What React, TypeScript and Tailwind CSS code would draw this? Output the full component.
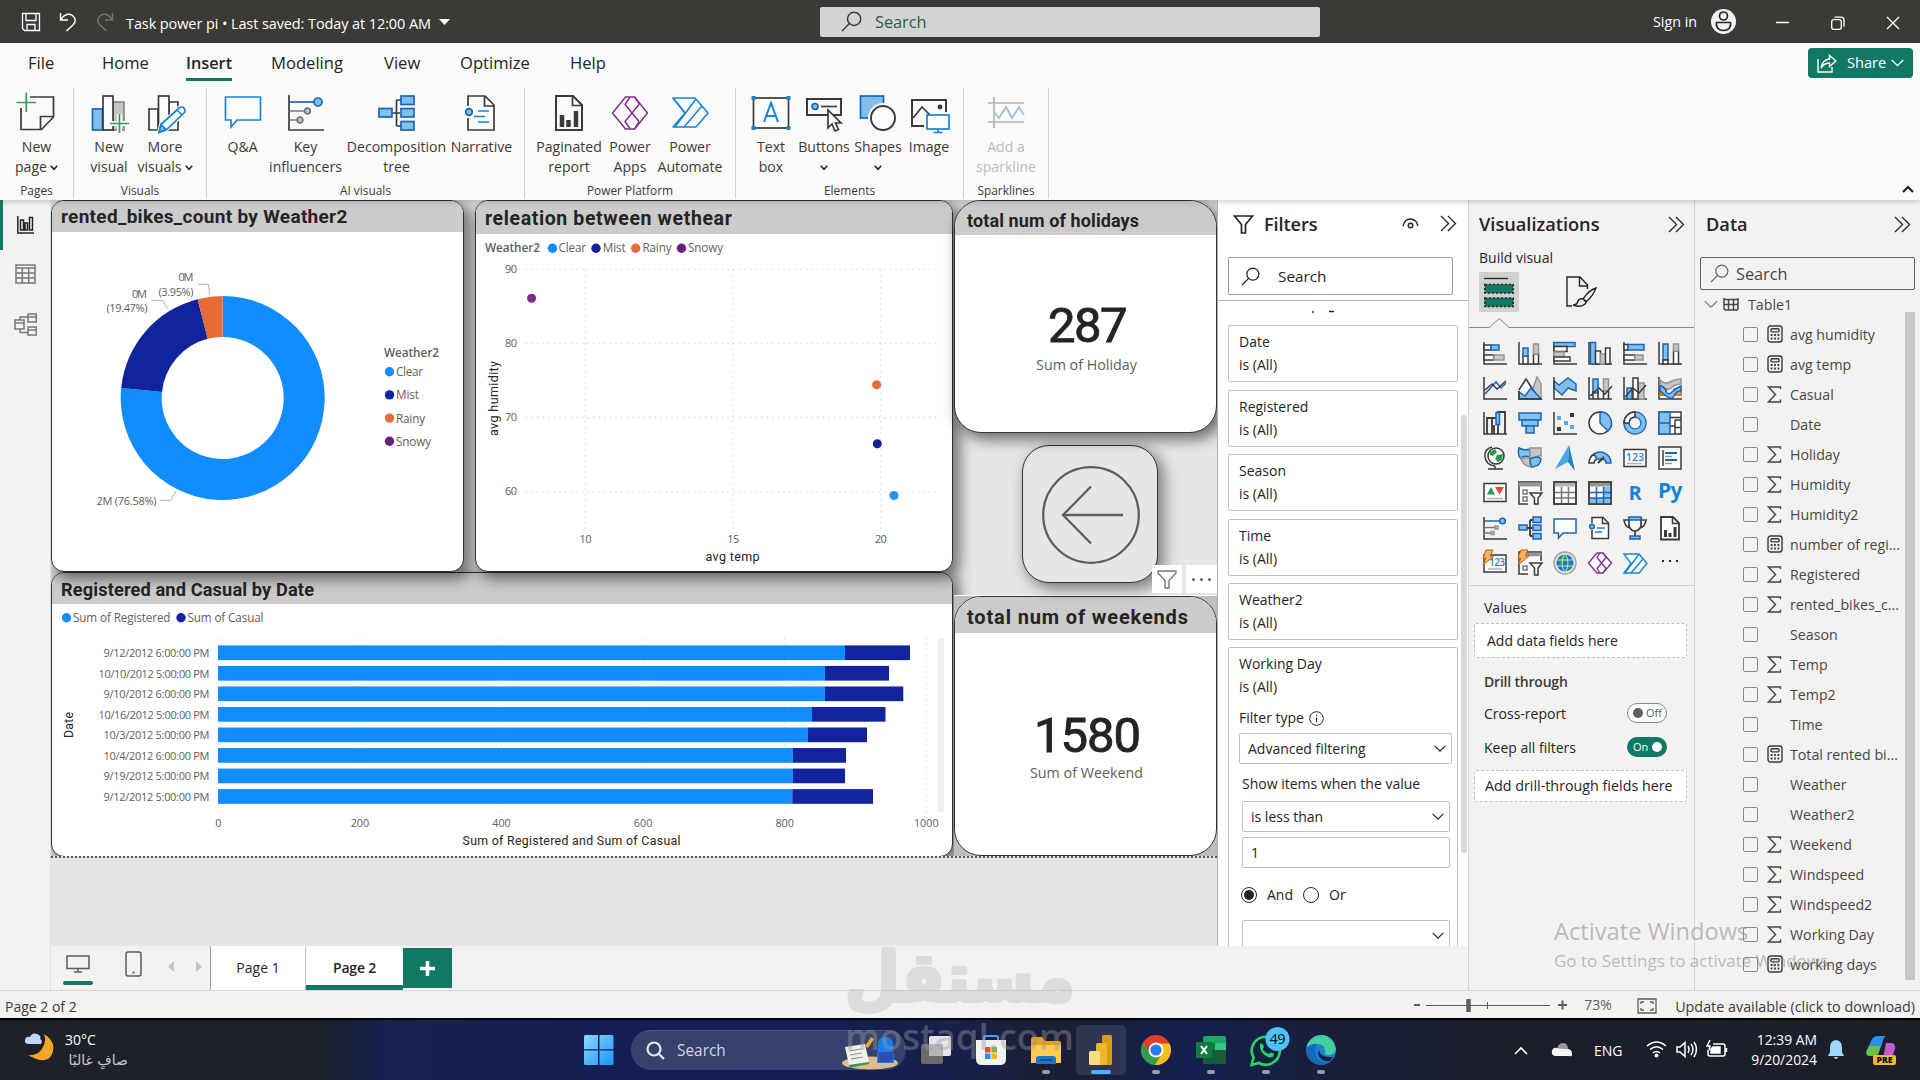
import React from "react";

const K = "#3b3a39";
const B = "#1a66b5";
const F = "#83beec";
const G = "#c8c6c4";
const A = "#1484d6";
const P = "#7f2a8c";
const W = "#fdfdfd";

type Kids = { children?: React.ReactNode };

/* ---------- generic glyphs ---------- */
const Big = ({ children }: Kids) => (
  <svg width="38" height="38" viewBox="0 0 38 38" fill="none" stroke={K} strokeWidth="1.7" className="block overflow-visible">
    {children}
  </svg>
);
const Sm = ({ children }: Kids) => (
  <svg width="24" height="24" viewBox="0 0 24 24" fill="none" stroke={K} strokeWidth="1.5" className="block overflow-visible">
    {children}
  </svg>
);
const Glass = ({ size, color, w = 1.4 }: { size: number; color: string; w?: number }) => (
  <svg width={size} height={size} viewBox="0 0 20 20" fill="none" stroke={color} strokeWidth={w} className="block shrink-0">
    <circle cx="12.5" cy="7.5" r="6.3" />
    <path d="M8 12L1 19" />
  </svg>
);
const Chev = ({ color = "#252423", size = 12, w = 1.2 }: { color?: string; size?: number; w?: number }) => (
  <svg width={size} height={size * 0.6} viewBox="0 0 12 7" fill="none" stroke={color} strokeWidth={w} className="block shrink-0">
    <path d="M.7.8L6 6l5.300-5.200" />
  </svg>
);
const TinyChev = () => (
  <svg width="8" height="6" viewBox="0 0 8 6" fill="none" stroke="#252423" strokeWidth="1.6" className="inline-block">
    <path d="M.8.8L4 4.400 7.200.8" />
  </svg>
);
const DoubleChev = () => (
  <svg width="17" height="17" viewBox="0 0 17 17" fill="none" stroke="#252423" strokeWidth="1.3" className="block">
    <path d="M1 1l7.500 7.500L1 16M8 1l7.500 7.500L8 16" />
  </svg>
);
const Sigma = () => (
  <svg width="15" height="17" viewBox="0 0 15 17" fill="none" stroke="#444" strokeWidth="1.4" className="block">
    <path d="M13.500 3V1H1.500l7 7.500L1.500 16h12v-2.500" />
  </svg>
);
const Calc = () => (
  <svg width="16" height="18" viewBox="0 0 16 18" fill="none" stroke="#3b3a39" strokeWidth="1.4" className="block">
    <rect x="1" y="1" width="14" height="16" rx="2.500" />
    <rect x="4" y="3.700" width="8" height="3.200" rx="1" />
    <path d="M3.700 10h1.800M7.100 10h1.800M10.500 10h1.800M3.700 13.500h1.800M7.100 13.500h1.800M10.500 13.500h1.800" strokeWidth="1.900" />
  </svg>
);

/* ---------- ribbon ---------- */
const RIcon: Record<string, React.ReactNode> = {
  newPage: (
    <Big>
      <path d="M12 3H35.500V23L23.500 35.500H3V14" />
      <path d="M22.500 35.500V22.500H35.500" />
      <path d="M-1.500 8.500H18M8.300-1.500V18" stroke="#2f9e5b" />
    </Big>
  ),
  newVisual: (
    <Big>
      <rect x="21" y="8" width="13" height="28" fill={G} stroke="#8a8886" />
      <rect x="2.500" y="15" width="10" height="21" fill={F} stroke={B} />
      <rect x="13" y="2" width="10" height="34" fill={W} />
      <path d="M20 29.500H39M29.500 20V39" stroke="#fafafa" strokeWidth="5" />
      <path d="M20 29.500H39M29.500 20V39" stroke="#2f9e5b" />
    </Big>
  ),
  moreVisuals: (
    <Big>
      <path d="M3 15h9v21H3zM23 8h9v28h-9z" />
      <rect x="12.500" y="2" width="10.500" height="34" fill={W} />
      <path d="M13 38.500l2-8L33 14q3-2 5 0 2 3 0 5L20 36z" fill="#fafafa" stroke="#fafafa" strokeWidth="4" />
      <path d="M13 38.500l2-8L33 14q3-2 5 0 2 3 0 5L20 36zM31 16l5 5" fill={W} stroke={A} />
      <path d="M13 38.500l2-8 5 5z" fill={F} stroke={A} />
    </Big>
  ),
  qa: (
    <Big>
      <path d="M1.500 3H36.500V26H13L7 33V26H1.500z" stroke={A} fill={W} />
    </Big>
  ),
  key: (
    <Big>
      <path d="M2 1V36H37" />
      <path d="M2 8H27" stroke={B} />
      <path d="M2 17H17M2 26H10" stroke="#777" />
      <circle cx="31" cy="8" r="4" fill={F} stroke={B} />
      <circle cx="20.500" cy="17" r="2.800" fill={G} stroke="#777" />
      <circle cx="13" cy="26" r="2.800" fill={G} stroke="#777" />
    </Big>
  ),
  decomp: (
    <Big>
      <path d="M14 19H22M18.500 6V32M18.500 6H23M18.500 32H23" />
      <g fill={F} stroke={B}>
        <rect x="1" y="14.500" width="13" height="8.500" />
        <rect x="23" y="2" width="13" height="8.500" />
        <rect x="23" y="14.500" width="13" height="8.500" />
        <rect x="23" y="27.500" width="13" height="8.500" />
      </g>
    </Big>
  ),
  narrative: (
    <Big>
      <path d="M5 12V2H22L31 11V36H5V24" />
      <path d="M21.500 2V12H31" />
      <path d="M15 17H26M11 22.500H22M15 28H26" stroke={A} />
      <circle cx="6" cy="18" r="3.300" fill={F} stroke={B} />
    </Big>
  ),
  paginated: (
    <Big>
      <path d="M6 2H23L32 11V36H6z" strokeWidth="2" />
      <path d="M22.500 2V11.500H32" />
      <path d="M12 33V21M18.500 33V26M26 33V17" strokeWidth="4.500" />
    </Big>
  ),
  apps: (
    <Big>
      <g stroke={P} strokeLinejoin="round" strokeWidth="1.400">
        <path d="M14.500 3h9L36.500 19 23.500 35h-9L1.500 19z" />
        <path d="M19 3.500L14 10.500 28 27.500M19 34.500L14 27.500 28.500 10M28.500 10L23.500 3M28 27.500L23.500 35" />
      </g>
    </Big>
  ),
  automate: (
    <Big>
      <g stroke={A} strokeLinejoin="round" strokeWidth="1.500">
        <path d="M2 4h22l13 15-12 14H2l12-14z" />
        <path d="M25 5L4 33M31 12L13 33M14 19l-12-15" />
      </g>
    </Big>
  ),
  textBox: (
    <Big>
      <rect x="1.500" y="4" width="35" height="30" fill={W} />
      <path d="M12 28l7-19 7 19M14.500 22h9" stroke={A} strokeWidth="2" />
      <g fill={A} stroke="none">
        <rect x="-.5" y="2" width="4" height="4" /><rect x="34.500" y="2" width="4" height="4" />
        <rect x="-.5" y="32" width="4" height="4" /><rect x="34.500" y="32" width="4" height="4" />
      </g>
    </Big>
  ),
  buttons: (
    <Big>
      <rect x="2" y="5" width="34" height="16" strokeWidth="2" />
      <circle cx="10" cy="12.500" r="3" fill={F} stroke={B} />
      <path d="M16 12.500H32" />
      <path d="M23 16V34l4-4 3 7 3.500-1.500L30.500 29H36z" fill={W} stroke={K} />
    </Big>
  ),
  shapes: (
    <Big>
      <rect x="1.500" y="2" width="23" height="22" fill={F} stroke={B} />
      <circle cx="24" cy="24" r="15" fill="#fafafa" stroke="none" />
      <circle cx="24" cy="24" r="12" fill={W} strokeWidth="1.900" />
    </Big>
  ),
  image: (
    <Big>
      <path d="M14 32H2V6H36V18" strokeWidth="2" />
      <path d="M3 24l9-11 9 9" />
      <circle cx="30" cy="13" r="1.600" fill={K} />
      <rect x="17" y="21" width="22" height="14" fill={W} stroke={A} />
      <path d="M28 35v3.500M23.500 38.500h9" stroke={A} />
    </Big>
  ),
  spark: (
    <Big>
      <path d="M1 9H37M1 28H37M7 3V34" stroke="#b5b3b1" />
      <path d="M7 18l5 6 7-11 6 11 7-11 5 8" stroke="#9dbdd0" />
    </Big>
  ),
};

const RItem = ({ icon, a, b, cls, chev, dim }: { icon: string; a: string; b?: string; cls: string; chev?: boolean; dim?: boolean }) => (
  <div className={"flex shrink-0 flex-col items-center " + cls}>
    {RIcon[icon]}
    <div className={"mt-[5px] text-center text-[14.100px] leading-5 whitespace-nowrap " + (dim ? "text-[#bebcba]" : "text-[#3b3a37]")}>
      {a}
      <br />
      {b}
      {chev && <span className={b ? "ml-[3px]" : ""}><TinyChev /></span>}
    </div>
  </div>
);
const RGroup = ({ label, cls, children }: Kids & { label: string; cls: string }) => (
  <div className={"flex h-[111px] shrink-0 flex-col border-r border-[#d2d0ce] " + cls}>
    <div className="flex h-[95px] justify-center pt-[6px]">{children}</div>
    <div className="text-center text-[11.900px] leading-[18px] text-[#3b3a39]">{label}</div>
  </div>
);

const TitleBar = () => (
  <div className="flex h-[43px] items-center bg-[#3b3a37] text-white">
    <svg width="20" height="20" viewBox="0 0 20 20" fill="none" stroke="#fff" strokeWidth="1.300" className="ml-[21px]">
      <path d="M1.500 1.500H18.500V18.500H3.500L1.500 16.500zM5 1.500V8.500H15V1.500M6 18.500V12.500H14V18.500" />
    </svg>
    <svg width="18" height="20" viewBox="0 0 18 20" fill="none" stroke="#fff" strokeWidth="1.400" className="ml-[18px]">
      <path d="M1.500 1V8H9M1.800 7.500C5 2 10 1 13.500 3.500 17 6.500 17 10 14 13L7.500 19" />
    </svg>
    <svg width="18" height="20" viewBox="0 0 18 20" fill="none" stroke="#777572" strokeWidth="1.400" className="ml-[19px]">
      <path d="M16.500 1V8H9M16.200 7.500C13 2 8 1 4.500 3.500 1 6.500 1 10 4 13L10.500 19" />
    </svg>
    <div className="ml-[12px] w-[305px] pt-[5px] text-[14.500px] tracking-[-0.1px] whitespace-nowrap">Task power pi • Last saved: Today at 12:00 AM</div>
    <svg width="12" height="8" viewBox="0 0 12 8" className="mt-[3px] ml-[8px] shrink-0"><path d="M0 0h11L5.500 6z" fill="#fff" /></svg>
    <div className="ml-[369px] flex h-[30px] w-[500px] items-center rounded-[2px] bg-[#d4d3d1] pl-[21px]">
      <Glass size={21} color="#3b3a39" />
      <span className="ml-[13px] pt-[2px] text-[16.300px] text-[#245c4d]">Search</span>
    </div>
    <span className="ml-[333px] w-[46px] text-[14.300px] whitespace-nowrap">Sign in</span>
    <svg width="25" height="25" viewBox="0 0 25 25" className="ml-[12px]">
      <circle cx="12.500" cy="12.500" r="12.500" fill="#f3f2f1" />
      <g fill="none" stroke="#252423" strokeWidth="1.700">
        <circle cx="12.500" cy="7" r="4" />
        <path d="M5.500 13.500H19.500C20.500 18 17.500 21.500 12.500 21.500S4.500 18 5.500 13.500z" />
      </g>
    </svg>
    <svg width="124" height="14" viewBox="0 0 124 14" fill="none" stroke="#fff" strokeWidth="1.300" className="mt-[3px] ml-[40px]">
      <path d="M0 6.500H13M111 1l12 12M123 1l-12 12" />
      <rect x="55.700" y="3.700" width="9.600" height="9.600" rx="2" />
      <path d="M58.500 1.200H65q3 0 3 3v6.500" />
    </svg>
  </div>
);

const Ribbon = () => (
  <div className="relative z-20 h-[157px] bg-[#fafafa] shadow-[0_2px_6px_rgba(0,0,0,0.18)]">
    <div className="flex h-[45px] justify-between pt-[8px] text-[16.600px] text-[#252423]">
      <div className="flex">
        <span className="w-[74px] pl-[28px]">File</span>
        <span className="w-[84px] pl-[28px]">Home</span>
        <span className="w-[85px] pl-[28px]">
          <span className="inline-block h-[30px] border-b-[3px] border-[#117865] text-[16.300px] font-semibold">Insert</span>
        </span>
        <span className="w-[113px] pl-[28px]">Modeling</span>
        <span className="w-[76px] pl-[28px]">View</span>
        <span className="w-[109px] pl-[28px]">Optimize</span>
        <span className="pl-[29px]">Help</span>
      </div>
      <div className="mt-[-3px] mr-[7px] flex h-[30px] w-[105px] items-center rounded-[4px] bg-[#117865] pl-[9px] text-white">
        <svg width="20" height="19" viewBox="0 0 20 19" fill="none" stroke="#fff" strokeWidth="1.400">
          <path d="M1 5V18H15V13" />
          <path d="M12.500 1.500L19 7l-6.500 5.500V9C8.500 9 6 11 4 14 4.500 9 8 5.200 12.500 5z" />
        </svg>
        <span className="mr-[5px] ml-[10px] text-[14.600px]">Share</span>
        <Chev color="#fff" size={13} />
      </div>
    </div>
    <div className="flex">
      <RGroup label="Pages" cls="w-[74px]">
        <RItem icon="newPage" a="New" b="page" chev cls="w-[72px]" />
      </RGroup>
      <RGroup label="Visuals" cls="w-[133px]">
        <RItem icon="newVisual" a="New" b="visual" cls="w-[54px]" />
        <RItem icon="moreVisuals" a="More" b="visuals" chev cls="mr-[4px] w-[58px]" />
      </RGroup>
      <RGroup label="AI visuals" cls="w-[318px]">
        <RItem icon="qa" a="Q&A" cls="ml-[2px] w-[48px]" />
        <RItem icon="key" a="Key" b="influencers" cls="w-[78px]" />
        <RItem icon="decomp" a="Decomposition" b="tree" cls="w-[104px]" />
        <RItem icon="narrative" a="Narrative" cls="w-[66px]" />
      </RGroup>
      <RGroup label="Power Platform" cls="w-[211px]">
        <RItem icon="paginated" a="Paginated" b="report" cls="w-[72px]" />
        <RItem icon="apps" a="Power" b="Apps" cls="w-[50px]" />
        <RItem icon="automate" a="Power" b="Automate" cls="mr-[2px] w-[70px]" />
      </RGroup>
      <RGroup label="Elements" cls="w-[228px]">
        <RItem icon="textBox" a="Text" b="box" cls="ml-[4px] w-[44px]" />
        <RItem icon="buttons" a="Buttons" chev cls="ml-[3px] w-[56px]" />
        <RItem icon="shapes" a="Shapes" chev cls="w-[52px]" />
        <RItem icon="image" a="Image" cls="w-[50px]" />
      </RGroup>
      <RGroup label="Sparklines" cls="w-[85px]">
        <RItem icon="spark" a="Add a" b="sparkline" dim cls="w-[84px]" />
      </RGroup>
      <div className="flex flex-1 items-end justify-end pr-[6px] pb-[6px]">
        <svg width="12" height="8" viewBox="0 0 12 8" fill="none" stroke="#252423" strokeWidth="2.200"><path d="M1 7l5-5 5 5" /></svg>
      </div>
    </div>
  </div>
);

/* ---------- report canvas ---------- */
const Card = ({ cls, head, title, titleCls, children }: Kids & { cls: string; head: string; title: string; titleCls: string }) => (
  <div className={"flex shrink-0 flex-col overflow-hidden border border-[#333] bg-white " + cls}>
    <div className={"flex shrink-0 items-center font-['Roboto'] font-bold whitespace-nowrap text-[#252423] " + head}>
      <span className={titleCls}>{title}</span>
    </div>
    {children}
  </div>
);

const CX = 222.700, CY = 398, RO = 102, RI = 61;
const pt = (r: number, f: number) => {
  const t = f * Math.PI * 2;
  return `${CX + r * Math.sin(t)} ${CY - r * Math.cos(t)}`;
};
const arc = (a: number, b: number) => {
  const l = b - a > 0.5 ? 1 : 0;
  return `M${pt(RO, a)}A${RO} ${RO} 0 ${l} 1 ${pt(RO, b)}L${pt(RI, b)}A${RI} ${RI} 0 ${l} 0 ${pt(RI, a)}Z`;
};
const series = [
  { n: "Clear", c: "#118dff" },
  { n: "Mist", c: "#12239e" },
  { n: "Rainy", c: "#e66c37" },
  { n: "Snowy", c: "#6b1f7c" },
];

const Donut = () => (
  <svg width="410" height="337" viewBox="52 232 410 337" className="block shrink-0" fontFamily="Open Sans" fontSize="11" fill="#605e5c">
    <path d={arc(0, 0.7658)} fill="#118dff" />
    <path d={arc(0.7658, 0.9605)} fill="#12239e" />
    <path d={arc(0.9605, 1)} fill="#e66c37" />
    <g fill="none" stroke="#b3b0ad">
      <path d="M197.500 284.300H208.500L209.700 295M151.500 300.300H162.500L168 309M160 500.300H171L176 491" />
    </g>
    <text x="178.500" y="281" textLength="15">0M</text>
    <text x="158.500" y="296" textLength="35">(3.95%)</text>
    <text x="132" y="298" textLength="15">0M</text>
    <text x="106.500" y="312.300" textLength="41">(19.47%)</text>
    <text x="96.500" y="505" textLength="60">2M (76.58%)</text>
    <text x="384" y="357" fontSize="11.800" fontWeight="600" textLength="55">Weather2</text>
    {series.map((s, i) => (
      <g key={s.n}>
        <circle cx="389.500" cy={371.700 + i * 23.200} r="4.700" fill={s.c} />
        <text x="396" y={375.900 + i * 23.300} fontSize="11.700" textLength={[27, 23, 29, 35][i]}>{s.n}</text>
      </g>
    ))}
  </svg>
);

const Scatter = () => (
  <svg width="476" height="335" viewBox="476 234 476 335" className="block shrink-0" fontFamily="Open Sans" fontSize="11" fill="#605e5c">
    <text x="485" y="252" fontSize="11.800" fontWeight="600" textLength="55">Weather2</text>
    {series.map((s, i) => (
      <g key={s.n}>
        <circle cx={[552.500, 596, 635.700, 681.500][i]} cy="248.300" r="4.700" fill={s.c} />
        <text x={[558.500, 602.700, 642.500, 688][i]} y="252.200" fontSize="11.700" textLength={[27.500, 23, 29, 35][i]}>{s.n}</text>
      </g>
    ))}
    <g stroke="#d0cecc" strokeDasharray="1 4.600" strokeWidth="1.300">
      {[269.300, 343.400, 417.500, 491.600].map((y) => <path key={y} d={`M526 ${y}H938`} />)}
      {[585.300, 733, 880.600].map((x) => <path key={x} d={`M${x} 270V531`} />)}
    </g>
    {["90", "80", "70", "60"].map((t, i) => <text key={t} x="505" y={273 + i * 74.100} textLength="12">{t}</text>)}
    {["10", "15", "20"].map((t, i) => <text key={t} x={579.500 + i * 147.700} y="543" textLength="12">{t}</text>)}
    <circle cx="531.600" cy="298.300" r="4.500" fill="#7f2a8c" />
    <circle cx="876.600" cy="384.700" r="4.500" fill="#e66c37" />
    <circle cx="877.300" cy="443.800" r="4.500" fill="#12239e" />
    <circle cx="894" cy="495.500" r="4.500" fill="#2196ff" />
    <g fill="#252423" fontFamily="Roboto" fontSize="12.500">
      <text x="705.500" y="561" textLength="54">avg temp</text>
      <text transform="translate(498 436)rotate(-90)" textLength="75">avg humidity</text>
    </g>
  </svg>
);

const bars: [string, number, number][] = [
  ["9/12/2012 6:00:00 PM", 845, 910],
  ["10/10/2012 5:00:00 PM", 825, 889],
  ["9/10/2012 6:00:00 PM", 825, 903.300],
  ["10/16/2012 5:00:00 PM", 812, 885.500],
  ["10/3/2012 5:00:00 PM", 808, 867],
  ["10/4/2012 6:00:00 PM", 793, 846],
  ["9/19/2012 5:00:00 PM", 793, 845],
  ["9/12/2012 5:00:00 PM", 792.300, 873],
];
const Bars = () => (
  <svg width="899" height="250" viewBox="52 604 899 250" className="block shrink-0" fontFamily="Open Sans" fontSize="11" fill="#605e5c">
    <circle cx="66.500" cy="617.700" r="4.700" fill="#118dff" />
    <text x="73" y="621.500" fontSize="11.700" textLength="97.500">Sum of Registered</text>
    <circle cx="181" cy="617.700" r="4.700" fill="#12239e" />
    <text x="187.500" y="621.500" fontSize="11.700" textLength="76">Sum of Casual</text>
    <rect x="938" y="638" width="6" height="175" rx="3" fill="#efefef" />
    {[0, 1, 2, 3, 4, 5].map((i) => (
      <g key={i}>
        <path d={`M${218.300 + i * 141.600} 638V813`} stroke="#d0cecc" strokeDasharray="1 4.600" />
        <text x={218.300 + i * 141.600} y="827" textAnchor="middle" fontSize="10.800">{i * 200}</text>
      </g>
    ))}
    {bars.map(([d, a, b], i) => (
      <g key={i}>
        <text x="209.500" y={657 + i * 20.530} textAnchor="end" textLength={d.length > 20 ? 111 : 106}>{d}</text>
        <rect x="218" y={645.400 + i * 20.530} width={a - 218} height="14.700" fill="#118dff" />
        <rect x={a} y={645.400 + i * 20.530} width={b - a} height="14.700" fill="#12239e" />
      </g>
    ))}
    <g fill="#252423" fontFamily="Roboto" fontSize="12.300">
      <text x="462.500" y="844.500" textLength="218">Sum of Registered and Sum of Casual</text>
      <text transform="translate(73 738)rotate(-90)" textLength="26">Date</text>
    </g>
  </svg>
);

const Kpi = ({ v, label, cls, gap }: { v: string; label: string; cls: string; gap: string }) => (
  <div className={"text-center " + cls}>
    <div className={"pl-[3px] font-['Roboto'] text-[49px] leading-[56px] text-[#252423] [-webkit-text-stroke:0.9px_#252423] " + gap}>{v}</div>
    <div className="pl-[2px] text-[14.300px] leading-5 text-[#605e5c]">{label}</div>
  </div>
);

const Canvas = () => (
  <div className="flex h-[746px] w-[1166px] shrink-0 flex-col overflow-hidden bg-[#e6e6e6]">
    <div className="flex h-[658px] overflow-hidden border-b-2 border-dotted border-[#555]">
      <div className="flex w-[902px] shrink-0 flex-col">
        <div className="z-10 flex gap-[11px]">
          <Card cls="h-[371.500px] w-[413px] rounded-[13px] shadow-[5px_5px_14px_2px_rgba(0,0,0,0.5)]" head="h-[31px] bg-[#cbcbcb] pt-[2px] pl-[9px]" title="rented_bikes_count by Weather2" titleCls="text-[19px] tracking-[0.3px]">
            <Donut />
          </Card>
          <Card cls="h-[371.500px] w-[478px] rounded-[13px] shadow-[5px_5px_14px_2px_rgba(0,0,0,0.5)]" head="h-[33px] bg-[#cbcbcb] pl-[9px] pt-[3px]" title="releation between wethear" titleCls="text-[19.500px] tracking-[0.620px]">
            <Scatter />
          </Card>
        </div>
        <Card cls="mt-[0.500px] h-[285px] w-[902px] rounded-[13px] shadow-[5px_5px_14px_2px_rgba(0,0,0,0.5)]" head="h-[31px] bg-[#cbcbcb] pl-[9px] pt-[2px]" title="Registered and Casual by Date" titleCls="text-[18.200px] tracking-[0.130px]">
          <Bars />
        </Card>
      </div>
      <div className="ml-px flex w-[263px] shrink-0 flex-col items-center">
        <Card cls="z-10 h-[233px] w-[263px] rounded-[27px] shadow-[5px_5px_14px_2px_rgba(0,0,0,0.5)]" head="h-[34px] bg-[#cbcbcb] pl-[12px] pt-[4px]" title="total num of holidays" titleCls="text-[18px] tracking-[0.1px]">
          <Kpi v="287" label="Sum of Holiday" cls="pt-[63px]" gap="mb-px tracking-[-1.500px]" />
        </Card>
        <div className="relative mt-[12px] ml-[9px] flex h-[138px] w-[136px] shrink-0 items-center justify-center rounded-[27px] border border-[#333] bg-[#e6e6e6] pl-px pt-px shadow-[5px_5px_14px_2px_rgba(0,0,0,0.42)]">
          <svg width="100" height="100" viewBox="0 0 100 100" fill="none" stroke="#605e5c" strokeWidth="2.300">
            <circle cx="50" cy="50" r="47.800" />
            <path d="M82 50H22M50 21.500L22 50l28 28.500" />
          </svg>
          <div className="absolute top-[119px] left-[129px] z-20 flex gap-[4px]">
            <div className="flex h-[28px] w-[30px] items-center justify-center bg-white">
              <svg width="20" height="19" viewBox="0 0 20 19" fill="none" stroke="#777" strokeWidth="1.400"><path d="M1 1H19V3L12 10.500V18H8V10.500L1 3z" /></svg>
            </div>
            <div className="flex h-[28px] w-[31px] items-center justify-center gap-[5px] bg-white">
              <i className="size-[3px] rounded-full bg-[#666]" /><i className="size-[3px] rounded-full bg-[#666]" /><i className="size-[3px] rounded-full bg-[#666]" />
            </div>
          </div>
        </div>
        <div className="mt-[12px] h-[261px] w-[263px] border-t border-[#f8f8f8] bg-[#bdbdbd]">
          <Card cls="h-[260px] w-[263px] rounded-[27px]" head="h-[36px] bg-[#cbcbcb] pl-[12px] pt-[3px]" title="total num of weekends" titleCls="text-[20px] tracking-[0.850px]">
            <Kpi v="1580" label="Sum of Weekend" cls="pt-[75px]" gap="mb-[-1px] tracking-[-1px]" />
          </Card>
        </div>
      </div>
    </div>
  </div>
);

/* ---------- filters ---------- */
const Select = ({ t, cls }: { t: string; cls: string }) => (
  <div className={"flex shrink-0 items-center justify-between rounded-[2px] border border-[#c2c0be] pr-[5px] pl-[8px] " + cls}>
    <span>{t}</span>
    <Chev />
  </div>
);
const Filters = () => (
  <div className="flex h-[746px] w-[251px] shrink-0 flex-col overflow-hidden border-l border-[#b3b0ad] bg-white text-[#252423]">
    <div className="flex h-[57px] shrink-0 items-center pb-[8px] pl-[15px]">
      <svg width="21" height="19" viewBox="0 0 21 19" fill="none" stroke="#252423" strokeWidth="1.700"><path d="M1.500 1H19.500L12.500 9.500V18H8.500V9.500z" /></svg>
      <span className="ml-[10px] w-[138px] pt-px text-[18.200px] font-semibold tracking-[-0.1px]">Filters</span>
      <svg width="17" height="12" viewBox="0 0 17 12" fill="none" stroke="#252423" strokeWidth="1.400" className="mb-[2px]"><path d="M1 8C2 3.500 5 1 8.500 1S15 3.500 16 8" /><circle cx="8.500" cy="7.500" r="2.300" /></svg>
      <span className="mb-[2px] ml-[21px]"><DoubleChev /></span>
    </div>
    <div className="flex h-[44px] shrink-0 border-b border-[#b3b0ad] pl-[10px]">
      <div className="flex h-[38px] w-[225px] items-center rounded-[2px] border border-[#a19f9d] pl-[12px]">
        <Glass size={19} color="#252423" w={1.300} />
        <span className="ml-[18px] text-[15.300px]">Search</span>
      </div>
    </div>
    <div className="flex min-h-0 flex-1 pl-[10px] text-[14px] leading-5">
      <div className="flex w-[230px] shrink-0 flex-col gap-[7.400px] overflow-hidden">
        <div className="h-[17px] shrink-0 pt-[9px] pl-[84px]">
          <svg width="24" height="4" viewBox="0 0 24 4"><path d="M0 2h2M17 1.500h5" stroke="#252423" strokeWidth="1.500" /></svg>
        </div>
        {["Date", "Registered", "Season", "Time", "Weather2"].map((n) => (
          <div key={n} className="flex h-[57px] shrink-0 flex-col gap-[3px] rounded-[2px] border border-[#c2c0be] pt-[6px] pl-[10px]">
            <span>{n}</span>
            <span>is (All)</span>
          </div>
        ))}
        <div className="flex h-[400px] shrink-0 flex-col rounded-[2px] border border-[#c2c0be] pt-[6px] pl-[10px]">
          <span>Working Day</span>
          <span className="mt-[3px]">is (All)</span>
          <span className="mt-[11px] flex items-center gap-[5px]">
            Filter type
            <svg width="15" height="15" viewBox="0 0 15 15" fill="none" stroke="#252423"><circle cx="7.500" cy="7.500" r="6.800" /><path d="M7.500 6.500V11M7.500 3.800V5.200" /></svg>
          </span>
          <Select t="Advanced filtering" cls="mt-[5px] h-[31px] w-[213px]" />
          <span className="mt-[10px] ml-[3px]">Show items when the value</span>
          <Select t="is less than" cls="mt-[7px] ml-[3px] h-[31px] w-[208px]" />
          <div className="mt-[5px] ml-[3px] h-[31px] w-[208px] shrink-0 rounded-[2px] border border-[#c2c0be] pt-[5px] pl-[8px]">1</div>
          <div className="mt-[17px] ml-[2px] flex h-5 shrink-0 items-center">
            <i className="flex size-[16px] items-center justify-center rounded-full border border-[#252423]"><i className="size-[10px] rounded-full bg-[#252423]" /></i>
            <span className="ml-[10px]">And</span>
            <i className="ml-[10px] size-[16px] rounded-full border border-[#252423]" />
            <span className="ml-[10px]">Or</span>
          </div>
          <Select t="" cls="mt-[15px] ml-[3px] h-[31px] w-[208px]" />
        </div>
      </div>
      <div className="mt-[114px] ml-[3px] h-[438px] w-[6px] rounded-full bg-[#dad8d6]" />
    </div>
  </div>
);

/* ---------- visualization gallery ---------- */
const ax = <path d="M1 1V23H24" />;
const blue = { fill: F, stroke: B };
const grey = { fill: G, stroke: "#979593" };
const bolt = <path d="M3-1h7L7 5h4L0 14 3 7H0z" fill="#f7b267" stroke="#c4600b" strokeWidth="1" />;
const gallery: React.ReactNode[] = [
  <Sm>{ax}<rect x="1" y="4" width="7" height="5" fill={W} /><rect x="8" y="4" width="8" height="5" {...blue} /><rect x="1" y="14" width="10" height="5" fill={W} /><rect x="11" y="14" width="10" height="5" {...grey} /></Sm>,
  <Sm>{ax}<rect x="5" y="15" width="5" height="8" fill={W} /><rect x="5" y="7" width="5" height="8" {...blue} /><rect x="15.500" y="13" width="5" height="10" fill={W} /><rect x="15.500" y="3" width="5" height="10" {...grey} /></Sm>,
  <Sm>{ax}<rect x="1" y="1.500" width="21" height="4" {...blue} /><rect x="1" y="5.500" width="13" height="5" fill={W} /><rect x="1" y="11" width="10" height="5" {...grey} /><rect x="1" y="16" width="16" height="4" fill={W} /></Sm>,
  <Sm>{ax}<rect x="2.500" y="1.500" width="5" height="21.500" {...blue} /><rect x="7.500" y="10" width="5" height="13" fill={W} /><rect x="12.500" y="13" width="5" height="10" {...grey} /><rect x="17.500" y="7" width="4.500" height="16" fill={W} /></Sm>,
  <Sm>{ax}<rect x="1" y="3.500" width="4" height="5.500" fill={W} /><rect x="5" y="3.500" width="16" height="5.500" {...blue} /><rect x="1" y="14" width="11" height="5" fill={W} /><rect x="12" y="14" width="8" height="5" {...grey} /></Sm>,
  <Sm>{ax}<rect x="5" y="3" width="5" height="16" {...blue} /><rect x="5" y="19" width="5" height="4" fill={W} /><rect x="15.500" y="10" width="5" height="13" fill={W} /><rect x="15.500" y="3" width="5" height="7" {...grey} /></Sm>,
  <Sm>{ax}<path d="M2 18L13 6l5 6 5-5" stroke={B} /><path d="M2 14l7-6 5 5 9-8" /></Sm>,
  <Sm><path d="M11 23L19 1l4 7v15z" {...grey} /><path d="M1 14L8 3l9 14" fill={W} /><path d="M1 23V16l6 4 6-8 10 11z" {...blue} /><path d="M1 15V23H24" /></Sm>,
  <Sm><path d="M1 5l5 4 9-7 8 6v7l-8-3-6 7-8-7z" {...blue} />{ax}</Sm>,
  <Sm>{ax}<rect x="5" y="3" width="5" height="14" {...blue} /><rect x="15.500" y="3" width="5" height="12" {...grey} /><path d="M5 23V15M10 23V15M15.500 23V15M20.500 23V15M2 20l9-8 6 6 7-8" /></Sm>,
  <Sm>{ax}<rect x="4" y="12" width="5" height="11" {...blue} /><rect x="15" y="7" width="6" height="16" {...grey} /><rect x="10" y="2" width="5" height="21" fill={W} /><path d="M2 21l8-9 6 5 7-8" /></Sm>,
  <Sm>{ax}<path d="M2 4q5 5 10 2t11-3v5q-6 0-10 4T2 9z" {...grey} /><path d="M2 13h6v6H2zM16 13h7v6h-7z" fill="#f4a23c" stroke="#c4600b" /><path d="M2 10q4 0 6 5t6 1 9-6v5q-5 0-7 5t-9-1-5-4z" {...blue} /></Sm>,
  <Sm>{ax}<path d="M4 23V7h5v16M15 23V1h7v22M9 7h6M11 23V14" strokeWidth="1.800" /><rect x="13" y="1.500" width="3.500" height="12" {...blue} /></Sm>,
  <Sm><g {...blue}><rect x="1" y="2" width="22" height="7" /><rect x="4" y="9" width="16" height="6" /><rect x="8" y="15" width="8" height="7" /></g></Sm>,
  <Sm>{ax}<g stroke="none"><path d="M17 2h4v4h-4zM4 16h4v4H4z" fill={K} /><path d="M4 5h4v4H4zM11 10h4v4h-4zM17 14h4v4h-4z" fill="#5aa9e6" /></g></Sm>,
  <Sm><circle cx="12" cy="12" r="11" fill={W} /><path d="M12 1v11l8 8A11 11 0 0 0 12 1z" {...blue} /></Sm>,
  <Sm><circle cx="12" cy="12" r="8.500" stroke={B} strokeWidth="6.500" /><circle cx="12" cy="12" r="8.500" stroke={F} strokeWidth="4" /><path d="M3.500 12A8.500 8.500 0 0 1 12 3.500" stroke={W} strokeWidth="5" /><path d="M1 12A11 11 0 0 1 12 1V6A6 6 0 0 0 6 12z" /></Sm>,
  <Sm><rect x="1" y="1" width="22" height="22" fill={W} /><path d="M1 1H12V23H1z" {...blue} /><path d="M1 12H12" stroke={B} /><path d="M12 6.500H23M12 15H17V23M17 9V15M17 9H23M17 16.500h6" /></Sm>,
  <Sm><circle cx="13" cy="10" r="8" fill={W} /><path d="M7 6l5-3 2 3-4 4-3-1zM14 9l6-1-1 6-4 2-3-3z" fill="#2b9a50" stroke="none" /><path d="M9 1Q1 3 2 11t10 9M12 20v3M5 23H20" /></Sm>,
  <Sm><path d="M1 2q5 3 11 1v8q-7-2-9 2-4-4-2-11z" {...blue} /><path d="M12 2h11v8q-4-1-5 3h-6zM3 12h10v9Q5 20 3 12z" {...grey} /><path d="M12 13q8-4 11 0-1 7-6 7-5 4-5-7z" {...blue} /></Sm>,
  <Sm><path d="M16-1L2 23l13-7z" fill="#4aa8e8" stroke="none" /><path d="M16-1l6 26-7-9z" fill="#1f7fc9" stroke="none" /></Sm>,
  <Sm><path d="M1 17A11 11 0 0 1 6 8l3 5Q6 14 6 17z" fill={W} /><path d="M6 8a11 11 0 0 1 17 9H18q0-3-3-4l-6 0z" {...blue} /><path d="M10 17l6-6" strokeWidth="2" /></Sm>,
  <Sm><rect x="1" y="3.500" width="22" height="17" fill={W} /><text x="3" y="14.500" fill={A} stroke="none" fontFamily="Open Sans" fontSize="10" fontWeight="600" textLength="18">123</text><path d="M4 17.500H19" stroke="#b5b3b1" /></Sm>,
  <Sm><rect x="1" y="1" width="22" height="22" fill={W} /><path d="M5 4V20" /><path d="M7 7H19M7 14H19" stroke={B} strokeWidth="2" /><path d="M7 10.500h7M7 17.500h7" stroke="#979593" /></Sm>,
  <Sm><rect x="1" y="2.500" width="22" height="18" fill={W} /><path d="M4 13.500L8 6l4 7.500z" fill="#2b9a50" stroke="none" /><path d="M12 6h9l-4.500 7.500z" fill="#e04a2f" stroke="none" /><path d="M4 17.500H20" stroke="#b5b3b1" /></Sm>,
  <Sm><path d="M10 23H1V1H23V10" fill={W} /><path d="M1 3.500H23" strokeWidth="4" stroke="#979593" /><path d="M5 9h4v4H5zM5 16h4v4H5z" stroke="#777" /><path d="M12 12H24L20 17V23H16.500V17z" fill={W} /></Sm>,
  <Sm><rect x="1" y="1" width="22" height="22" fill={W} /><path d="M1 3.500H23" strokeWidth="4" stroke="#b5b3b1" /><path d="M1 11.500H23M1 17H23M8.500 6V23M15.500 6V23" stroke="#777" /><rect x="1" y="1" width="22" height="22" /></Sm>,
  <Sm><rect x="1" y="1" width="22" height="22" fill={W} /><path d="M15.500 6H23V23H1V17H15.500z" fill={F} stroke="none" /><path d="M1 3.500H23" strokeWidth="4" stroke="#979593" /><path d="M1 11.500H23M1 17H23M8.500 6V23M15.500 6V23" stroke={B} /><rect x="1" y="1" width="22" height="22" /></Sm>,
  <div className="flex size-6 items-center justify-center font-['Open_Sans'] text-[20px] font-bold text-[#1484d6]">R</div>,
  <div className="flex size-6 items-center justify-center pb-1 font-['Open_Sans'] text-[21px] font-bold tracking-[-0.5px] text-[#1484d6]">Py</div>,
  <Sm>{ax}<path d="M1 5H17" stroke={B} /><path d="M1 11.500H12M1 17H8" stroke="#777" /><circle cx="19.500" cy="5" r="2.800" {...blue} /><rect x="12" y="10" width="3" height="3" {...grey} /><rect x="8" y="15.500" width="3" height="3" {...grey} /></Sm>,
  <Sm><path d="M8 12H15M12 4V20M12 4h3M12 20h3" strokeWidth="1.800" /><g {...blue}><rect x="1" y="9" width="8" height="5" /><rect x="15" y="1" width="8" height="5.500" /><rect x="15" y="9" width="8" height="5.500" /><rect x="15" y="17.500" width="8" height="5.500" /></g></Sm>,
  <Sm><path d="M1 3H23V17H10L5.500 22V17H1z" stroke={B} fill={W} /></Sm>,
  <Sm><path d="M4 7V1.500H15L20.500 7V22.500H4V14" fill={W} /><path d="M14.500 1.500V7.500H20" /><path d="M9 12H17M7 16H14" stroke={A} /><circle cx="4" cy="10.500" r="2.300" {...blue} /></Sm>,
  <Sm><path d="M6 2H18V10Q16 15 12 15T6 10zM6 4H1Q2 11 7 12M18 4h5Q22 11 17 12M12 15v5" fill={W} strokeWidth="1.700" /><rect x="6" y="1" width="12" height="3" {...blue} /><rect x="7" y="20" width="10" height="3" {...blue} /></Sm>,
  <Sm><path d="M3 1H15L21 7V23.500H3z" fill={W} strokeWidth="1.800" /><path d="M14.500 1V7.500H21" /><path d="M7.500 21V14M12 21V17M17 21V11" strokeWidth="3" /></Sm>,
  <Sm><rect x="1" y="4" width="22" height="17" fill={W} /><text x="6" y="15" fill={A} stroke="none" fontFamily="Open Sans" fontSize="10" fontWeight="600" textLength="16">123</text><path d="M5 18H19" stroke="#b5b3b1" />{bolt}</Sm>,
  <Sm><path d="M10 23H1V1H23V10" fill={W} /><path d="M8 3.500H23" strokeWidth="3.500" stroke="#979593" /><path d="M5 15h4v4H5z" stroke="#777" /><path d="M12 12H24L20 17V24H16.500V17z" fill={W} />{bolt}</Sm>,
  <Sm><circle cx="12" cy="12" r="11" stroke="#a5a3a1" fill="#dbe9ee" /><circle cx="12" cy="12" r="8.500" fill="#1d73c4" stroke="none" /><path d="M6 7l6-3 3 4-5 5-4 1zM13 14l6-2-3 7-4 1z" fill="#2b9a50" stroke="none" /><path d="M4 9H20M4 15H20M12 2Q6 12 12 22M12 2q6 10 0 20" stroke="#c9dde8" strokeWidth="1" /></Sm>,
  <Sm><g stroke={P} strokeWidth="1.300"><path d="M9 2h6l8.500 10L15 22H9L.500 12z" fill={W} /><path d="M12 2L9 6.500 18 17.500M12 22L9 17.500 18 6.500M18 6.500L15 2M18 17.500L15 22" /></g></Sm>,
  <Sm><g stroke={A} strokeWidth="1.400"><path d="M1 3h15l8 9.500L16 22H1l7-9.500z" fill={W} /><path d="M16 3L2 22M20 8L8 22" /></g></Sm>,
  <div className="flex size-6 items-center justify-center gap-[5px] pb-1"><i className="size-[2px] bg-[#252423]" /><i className="size-[2px] bg-[#252423]" /><i className="size-[2px] bg-[#252423]" /></div>,
];

const Viz = () => (
  <div className="flex h-[790px] w-[226px] shrink-0 flex-col border-l border-[#d6d4d2] bg-[#f3f2f1] text-[14px] text-[#252423]">
    <div className="flex h-[49px] items-center justify-between pr-[9px] pl-[10px]">
      <span className="pt-px text-[18.200px] font-semibold">Visualizations</span>
      <DoubleChev />
    </div>
    <div className="h-[23px] pl-[10px] text-[14px] leading-[18px]">Build visual</div>
    <div className="flex h-[46px] pl-[10px]">
      <div className="flex size-[40px] items-center justify-center rounded-[2px] bg-[#d2d0ce]">
        <svg width="30" height="32" viewBox="0 0 30 32" fill="none">
          <path d="M0 2.500H24" stroke="#252423" strokeWidth="1.300" />
          <g fill="#117865" stroke="#252423" strokeWidth="1.500" strokeDasharray="2.400 1.600"><rect x=".8" y="8.500" width="28.400" height="8.500" /><rect x=".8" y="22" width="28.400" height="8.500" /></g>
        </svg>
      </div>
      <svg width="31" height="31" viewBox="0 0 31 31" fill="none" stroke="#252423" strokeWidth="1.400" className="mt-[4px] ml-[47px]">
        <path d="M6 30H1V1H14L21.500 9V13M13.500 1V10H21" />
        <path d="M30 12q-7 2-13 11l3 3q7-6 10-14zM17 23q-4-1-5 2-1 4-5 4 8 3 12-1 2-2 1-3z" />
      </svg>
    </div>
    <svg width="225" height="12" viewBox="0 0 225 12" fill="none" stroke="#8a8886" className="block shrink-0"><path d="M0 9.500H20.500L30.300.5 40 9.500H225" /></svg>
    <div className="mt-[11px] grid w-[224px] shrink-0 grid-cols-6 gap-y-[11px] pl-[14px]">
      {gallery.map((g, i) => <div key={i} className="h-6 w-[35px]">{g}</div>)}
    </div>
    <div className="mt-[10px] flex flex-1 flex-col border-t border-[#d6d4d2] pt-[12px]">
      <span className="ml-[15px] leading-5">Values</span>
      <div className="mt-[5px] ml-[5px] flex h-[35px] w-[213px] items-center rounded-[2px] border border-dashed border-[#c2c0be] bg-white pl-[12px]">Add data fields here</div>
      <span className="mt-[14px] ml-[15px] leading-5 font-semibold tracking-[-0.200px] text-[#3b3a39]">Drill through</span>
      <div className="mt-[11px] mr-[27px] ml-[15px] flex h-5 items-center justify-between">
        <span>Cross-report</span>
        <span className="flex h-5 w-10 items-center gap-[3px] rounded-full border border-[#8a8886] bg-white pl-[5px] text-[11px] text-[#605e5c]"><i className="size-[10px] rounded-full bg-[#605e5c]" />Off</span>
      </div>
      <div className="mt-[14px] mr-[27px] ml-[15px] flex h-5 items-center justify-between">
        <span>Keep all filters</span>
        <span className="flex h-5 w-10 items-center gap-[4px] rounded-full bg-[#117865] pl-[6px] text-[11px] text-white">On<i className="size-[10px] rounded-full bg-white" /></span>
      </div>
      <div className="mt-[13px] ml-[5px] flex h-[32px] w-[213px] items-center rounded-[2px] border border-dashed border-[#c2c0be] bg-white pl-[10px] text-[14.300px] whitespace-nowrap">Add drill-through fields here</div>
    </div>
  </div>
);

/* ---------- data pane ---------- */
const fields: [string, string][] = [
  ["c", "avg humidity"], ["c", "avg temp"], ["s", "Casual"], ["", "Date"], ["s", "Holiday"], ["s", "Humidity"], ["s", "Humidity2"],
  ["c", "number of regi..."], ["s", "Registered"], ["s", "rented_bikes_c..."], ["", "Season"], ["s", "Temp"], ["s", "Temp2"], ["", "Time"],
  ["c", "Total rented bi..."], ["", "Weather"], ["", "Weather2"], ["s", "Weekend"], ["s", "Windspeed"], ["s", "Windspeed2"], ["s", "Working Day"], ["c", "working days"],
];
const Data = () => (
  <div className="flex h-[790px] flex-1 flex-col border-l border-[#d6d4d2] bg-[#f3f2f1]">
    <div className="flex h-[57px] items-center justify-between pr-[9px] pb-[8px] pl-[11px]">
      <span className="pt-px text-[18.200px] font-semibold text-[#252423]">Data</span>
      <DoubleChev />
    </div>
    <div className="ml-[5px] flex h-[33px] w-[215px] items-center rounded-[2px] border border-[#605e5c] pl-[9px]">
      <Glass size={19} color="#605e5c" w={1.200} />
      <span className="ml-[7px] pt-[2px] text-[16.300px] text-[#484644]">Search</span>
    </div>
    <div className="mt-[8px] flex h-[684px]">
      <div className="flex-1 overflow-hidden text-[14.200px] text-[#484644]">
        <div className="mt-[-9px] flex h-[30px] items-center pl-[9px]">
          <Chev color="#777" size={14} w={1} />
          <svg width="16" height="14" viewBox="0 0 16 14" fill="none" stroke="#444" strokeWidth="1.500" className="ml-[5px]"><path d="M1 0V11q0 2 2 2H13q2 0 2-2V0M1 2.500H15M1 7.500H15M5.500 2V13M10.500 2V13" /></svg>
          <span className="ml-[9px] pt-px">Table1</span>
        </div>
        {fields.map(([k, n]) => (
          <div key={n} className="flex h-[30px] items-center pl-[48px]">
            <i className="size-[15px] rounded-[2px] border border-[#8a8886]" />
            <span className="ml-[9px] flex w-[23px]">{k === "c" ? <Calc /> : k === "s" ? <Sigma /> : null}</span>
            <span className="pt-px whitespace-nowrap">{n}</span>
          </div>
        ))}
      </div>
      <div className="mt-[14px] mr-[5px] h-[668px] w-[10px] bg-[#c8c6c4]" />
    </div>
  </div>
);

/* ---------- page tabs and status ---------- */
const PageTabs = () => (
  <div className="flex h-[44px] bg-[#f3f2f1] text-[14px] text-[#252423]">
    <div className="flex w-[160px] items-start border-r border-[#a19f9d]">
      <div className="ml-[12px] flex w-[30px] flex-col items-center pt-[9px]">
        <svg width="24" height="18" viewBox="0 0 24 18" fill="none" stroke="#605e5c" strokeWidth="1.500"><path d="M1 1H23V13.500H1zM12 13.500V17M8 17h8" /></svg>
        <i className="mt-[8px] h-[4px] w-[30px] rounded-full bg-[#117865]" />
      </div>
      <svg width="17" height="26" viewBox="0 0 17 26" fill="none" stroke="#605e5c" strokeWidth="1.500" className="mt-[5px] ml-[32px]"><rect x="1" y="1" width="15" height="24" rx="2" /><path d="M7.500 21.500h2" strokeWidth="2" /></svg>
      <svg width="35" height="12" viewBox="0 0 35 12" fill="#c8c6c4" className="mt-[15px] ml-[26px]"><path d="M6 0V11L0 5.500zM28 0V11L34 5.500z" /></svg>
    </div>
    <div className="flex w-[95px] items-center justify-center border-r border-[#c8c6c4] bg-white pb-[2px]">Page 1</div>
    <div className="flex w-[97px] items-center justify-center border-b-[5px] border-[#117865] bg-white pt-[4px] text-[14px] font-semibold tracking-[-0.2px]">Page 2</div>
    <div className="mt-[2px] flex h-[40px] w-[49px] items-center justify-center bg-[#117865]">
      <svg width="15" height="15" viewBox="0 0 15 15" stroke="#fff" strokeWidth="3.500"><path d="M7.500 0V15M0 7.500H15" /></svg>
    </div>
  </div>
);

const Status = () => (
  <div className="flex h-[30px] items-center justify-between border-t border-b-2 border-t-[#dad8d6] border-b-black bg-[#f3f2f1] pt-[4px] pr-[5px] pl-[5px] text-[14px] text-[#3b3a39]">
    <span>Page 2 of 2</span>
    <div className="flex items-center">
      <svg width="153" height="16" viewBox="0 0 153 16" stroke="#605e5c" fill="none" className="mb-[3px]">
        <path d="M0 8h6M144 8h9M148.500 3.500v9" strokeWidth="2" />
        <path d="M12 8.500H136M73.500 5v7" />
        <path d="M54.500 2v13" strokeWidth="4.500" />
      </svg>
      <span className="ml-[17px] w-[53px] pb-[4px] text-[#605e5c]">73%</span>
      <svg width="20" height="16" viewBox="0 0 20 16" fill="none" stroke="#605e5c" strokeWidth="1.300" className="mb-px"><path d="M1 1H19V15H1zM4 6V4h3M13 4h3v2M4 10v2h3M13 12h3v-2" /></svg>
      <span className="ml-[18px] text-[14.350px] whitespace-nowrap">Update available (click to download)</span>
    </div>
  </div>
);

/* ---------- taskbar ---------- */
const App32 = ({ children, dot }: Kids & { dot?: boolean }) => (
  <div className="flex w-[55px] shrink-0 flex-col items-center pt-[15px]">
    <svg width="32" height="32" viewBox="0 0 32 32" className="block overflow-visible">{children}</svg>
    {dot && <i className="mt-[3px] h-[4px] w-[8px] rounded-full bg-[#9a9ba5]" />}
  </div>
);

const Taskbar = () => (
  <div className="flex h-[60px] items-start bg-[linear-gradient(90deg,#1d2129_0px,#1d2129_310px,#152150_390px,#131f55_800px,#18204a_960px,#1b1f33_1050px,#14204f_1190px,#191f3b_1320px,#1b1f2c_1480px,#1b1f28_1920px)] text-[14px] text-white">
    <svg width="32" height="32" viewBox="0 0 32 32" className="mt-[12px] ml-[23px]">
      <path d="M21 2Q34 10 29 22T5 23Q14 24 19 17T21 2z" fill="#f2a825" />
      <path d="M6 12Q1 12 2 8T7 5Q9 0 14 2T17 7Q20 8 18 12z" fill="#bfd9f5" />
    </svg>
    <div className="mt-[10px] ml-[10px] w-[110px] leading-5">
      <div className="text-[14px]">30°C</div>
      <div dir="rtl" className="w-[63px] font-['DejaVu_Sans'] text-[14px] whitespace-nowrap text-[#c8c8cc]">صافٍ غالبًا</div>
    </div>
    <svg width="30" height="30" viewBox="0 0 30 30" className="mt-[15px] ml-[409px]">
      <defs><linearGradient id="win" x1="0" y1="0" x2="1" y2="1"><stop offset="0" stopColor="#8fd6ff" /><stop offset="1" stopColor="#1997fb" /></linearGradient></defs>
      <path d="M0 1.500Q0 0 1.500 0H14V14.300H0zM15.500 0H28Q29.500 0 29.500 1.500V14.300H15.500zM0 15.500H14V30H1.500Q0 30 0 28.500zM15.500 15.500H29.500V28.500Q29.500 30 28 30H15.500z" fill="url(#win)" />
    </svg>
    <div className="mt-[10px] ml-[17px] flex h-[40px] w-[275px] items-center rounded-full border-t border-[#525c83] bg-[#36416d] pl-[15px]">
      <svg width="19" height="19" viewBox="0 0 19 19" fill="none" stroke="#e8e8ee" strokeWidth="2.200"><circle cx="8" cy="8" r="6.500" /><path d="M13 13l5 5" /></svg>
      <span className="ml-[12px] w-[164px] text-[15.400px] text-[#d5d7e2]">Search</span>
      <svg width="58" height="34" viewBox="0 0 58 34" className="mt-[4px]">
        <ellipse cx="29" cy="27" rx="28" ry="6.500" fill="#e2b98a" />
        <path d="M37 6q3-6 8-5 6 0 7 6l1 20H36z" fill="#1680e8" /><path d="M38 16h14v10H37z" fill="#2a4fb0" />
        <path d="M4 11l20-3 4 18-20 3z" fill="#f4f1ea" /><path d="M8 29l20-3v2L8 32z" fill="#2f9e5b" />
        <path d="M24 10l6-9 3 2-6 9z" fill="#f2a825" />
        <path d="M8 15l12-2M9 19l12-2M10 23l12-2" stroke="#8c8c8c" />
      </svg>
    </div>
    <div className="ml-[2px] flex">
      <App32><rect x="9" y="1" width="22" height="20" rx="2" fill="#e6e6ea" /><rect x="1" y="9" width="22" height="20" rx="2" fill="#6b6b6b" /><path d="M9 9h14v12H9z" fill="#b5b5b7" /></App32>
      <App32><path d="M9 6V2.500Q9 1 10.500 1H21.500Q23 1 23 2.500V6" fill="none" stroke="#3aa8f0" strokeWidth="2" /><path d="M1 5H31V24Q31 30 25 30H7Q1 30 1 24z" fill="#f2f2f2" /><path d="M10 12h5.500v5.500H10z" fill="#e74c26" /><path d="M16.500 12H22v5.500h-5.500z" fill="#7cb342" /><path d="M10 18.500h5.500V24H10z" fill="#2196f3" /><path d="M16.500 18.500H22V24h-5.500z" fill="#fbb703" /></App32>
      <App32 dot><path d="M1 4Q1 2 3 2H12l3 4H29Q31 6 31 8V28H1z" fill="#e5a21a" /><path d="M1 10H31V28H1z" fill="#fccb4f" /><path d="M6 29V24Q6 21 9 21H23Q26 21 26 24V29z" fill="#1b76c9" /><path d="M10 25H22" stroke="#0e4f91" strokeWidth="2" /></App32>
      <div className="mx-[2.500px] mt-[5px] flex h-[50px] w-[50px] flex-col items-center rounded-[5px] bg-white/10 pt-[10px]">
        <svg width="32" height="32" viewBox="0 0 32 32"><rect x="17" y="0" width="10" height="30" rx="1.500" fill="#d99a16" /><rect x="11" y="8" width="11" height="22" rx="1.500" fill="#eeb62c" /><rect x="4" y="16" width="11" height="14" rx="1.500" fill="#fbdc85" /></svg>
        <i className="mt-[3px] h-[4px] w-[20px] rounded-full bg-[#4cb4f7]" />
      </div>
      <App32 dot><circle cx="16" cy="15" r="15" fill="#e33b2e" /><path d="M3 7.500L10 19l6 3 5-3-6 11A15 15 0 0 1 3 7.500z" fill="#2ba14b" /><path d="M29.500 8.500H16l6 10-7 11.500A15 15 0 0 0 29.500 8.500z" fill="#f9c01c" /><circle cx="16" cy="15" r="7.500" fill="#fff" /><circle cx="16" cy="15" r="5.600" fill="#2f7ded" /></App32>
      <App32 dot><rect x="8" y="1" width="23" height="28" rx="1.500" fill="#21a366" /><path d="M8 8h12v7H8z" fill="#107c41" /><path d="M20 8h11v7H20z" fill="#33c481" /><path d="M8 15h23v14H8z" fill="#185c37" /><rect x="1" y="7" width="16" height="16" rx="1" fill="#107c41" /><path d="M6 11l6 8M12 11l-6 8" stroke="#fff" strokeWidth="2" /></App32>
      <App32 dot>
        <path d="M1.500 30l2-7.500A14 14 0 1 1 9 28z" fill="#13243f" stroke="#2bd366" strokeWidth="2.600" />
        <path d="M10 9q3-2 4 3-2 2 0 4t5 3q2-3 5 0-1 5-6 3-9-4-8-13z" fill="#2bd366" />
        <circle cx="27.500" cy="4" r="12" fill="#4cc2ff" />
        <text x="27.500" y="9.300" textAnchor="middle" fontFamily="Open Sans" fontSize="14.500" fill="#111" textLength="16">49</text>
      </App32>
      <App32 dot><circle cx="16" cy="15" r="15" fill="#1b7fd4" /><path d="M2 10Q8-1 18 0T31 14Q30 20 22 20 19 19 20 16 20 9 12 9 5 9 2 12z" fill="#42cfa0" /><path d="M10 16Q10 25 19 27 25 27 28 24 22 31 14 30 2 27 1 15 5 8 12 9 10 12 10 16z" fill="#1668b8" /><path d="M14 15Q15 23 28 22l-3 4Q15 27 13 19z" fill="#17203c" /></App32>
    </div>
    <svg width="14" height="9" viewBox="0 0 14 9" fill="none" stroke="#fff" strokeWidth="1.600" className="mt-[26px] ml-[166px]"><path d="M1 8l6-6 6 6" /></svg>
    <svg width="21" height="15" viewBox="0 0 21 15" className="mt-[22px] ml-[23px]"><path d="M6 7q1-6 6-6t5 6z" fill="#9a9a9a" /><path d="M4 14Q0 13 1 9T6 6t6 1 5 0 4 4-3 3z" fill="#f5f5f5" /></svg>
    <span className="mt-[20px] ml-[22px] w-[31px] text-[14px]">ENG</span>
    <svg width="82" height="20" viewBox="0 0 82 20" fill="none" stroke="#fff" strokeWidth="1.500" className="mt-[19px] ml-[21px]">
      <path d="M1 7Q10.500-1 20 7M4 10.500Q10.500 5 17 10.500M7 14q3.500-3 7 0" /><circle cx="10.500" cy="16.500" r="1.200" fill="#fff" />
      <path d="M31 8h3l5-4.500v14L34 13h-3zM42 7q2 3 0 7M45 5q4 5 0 11M48 3q5 7 0 15" />
      <path d="M67 5h10q2 0 2 2v8q0 2-2 2H64q-2 0-2-2v-4M80.500 9v4" /><path d="M67 8h7v6H65v-4z" fill="#fff" /><path d="M64 1l-3 6h3l-1 4" />
    </svg>
    <div className="mt-[10px] ml-[7px] w-[82px] text-right text-[13.900px] leading-5 whitespace-nowrap">12:39 AM<br />9/20/2024</div>
    <svg width="16" height="20" viewBox="0 0 16 20" fill="#9fd6fb" className="mt-[20px] ml-[11px]"><path d="M8 0Q14 1 14 7v5l2 4H0l2-4V7Q2 1 8 0zM5.500 17h5q-2.500 4-5 0z" /></svg>
    <svg width="30" height="30" viewBox="0 0 30 30" className="mt-[16px] ml-[22px]">
      <path d="M6 3Q8 0 12 0H20q-3 2-4 8l-3 8q-1 4-5 4H3Q-1 19 1 14z" fill="#2d8fe6" /><path d="M3 10h11l-1 6q-1 4-5 4H3Q-1 19 1 14z" fill="#6cc04a" />
      <path d="M20 7h6q4 1 3 6l-3 8q-1 4-5 4h-6q3-2 3-8z" fill="#c25cd0" />
      <rect x="7" y="19" width="23" height="10" rx="2" fill="#f7b928" />
      <text x="18.500" y="27.300" textAnchor="middle" fontFamily="Open Sans" fontWeight="800" fontSize="8.500" fill="#111">PRE</text>
    </svg>
  </div>
);

export default function App() {
  return (
    <div className="relative h-[1080px] w-[1920px] overflow-hidden bg-[#f3f2f1] font-['Open_Sans',sans-serif]">
      <TitleBar />
      <Ribbon />
      <div className="flex h-[790px]">
        <div className="flex w-[51px] shrink-0 flex-col border-r border-[#e1dfdd] bg-[#f3f2f1]">
          <div className="flex h-[50px] items-center border-l-[3px] border-[#117865] pl-[14px]">
            <svg width="17" height="18" viewBox="0 0 17 18" fill="none" stroke="#252423" strokeWidth="1.500"><path d="M.8 0V17H17M3.500 14V4H6.500V14zM8 14V7H10.500V14zM12.500 14V1.500H15.500V14z" /></svg>
          </div>
          <svg width="21" height="20" viewBox="0 0 21 20" fill="none" stroke="#797775" strokeWidth="1.500" className="mt-[14px] ml-[15px]"><path d="M1 1H20V19H1zM1 4H20M1 9H20M1 14H20M7.300 4V19M13.700 4V19" /></svg>
          <svg width="23" height="23" viewBox="0 0 23 23" fill="none" stroke="#797775" strokeWidth="1.500" className="mt-[29px] ml-[14px]"><path d="M1 7H10V16H1zM1 10H10M14 1H22.300V9H14zM14 4H22M14 14H22.300V22H14zM14 17H22M6 7V4H14M6 16v3.500h8" /></svg>
        </div>
        <div className="flex w-[1417px] shrink-0 flex-col">
          <div className="flex">
            <Canvas />
            <Filters />
          </div>
          <PageTabs />
        </div>
        <Viz />
        <Data />
      </div>
      <Status />
      <Taskbar />
      <div className="absolute top-[912px] left-[1554px] z-30 whitespace-nowrap text-[#8a8886]/55">
        <div className="text-[23.700px] leading-[38px]">Activate Windows</div>
        <div className="text-[17px] leading-[22px]">Go to Settings to activate Windows.</div>
      </div>
      <svg width="260" height="140" viewBox="830 935 260 140" className="absolute top-[935px] left-[830px] z-30 overflow-visible">
        <g opacity=".25" fill="#9a9c9c" stroke="#9a9c9c" strokeWidth="4" strokeLinejoin="round">
          <text x="960" y="1001" textAnchor="middle" direction="rtl" fontFamily="DejaVu Sans" fontWeight="700" fontSize="68" textLength="230" lengthAdjust="spacingAndGlyphs">مستقل</text>
        </g>
        <text x="845" y="1050" fontFamily="Open Sans" fontWeight="600" fontSize="36" textLength="229" lengthAdjust="spacingAndGlyphs" fill="#9a9c9c" fillOpacity=".42">mostaql.com</text>
      </svg>
    </div>
  );
}
